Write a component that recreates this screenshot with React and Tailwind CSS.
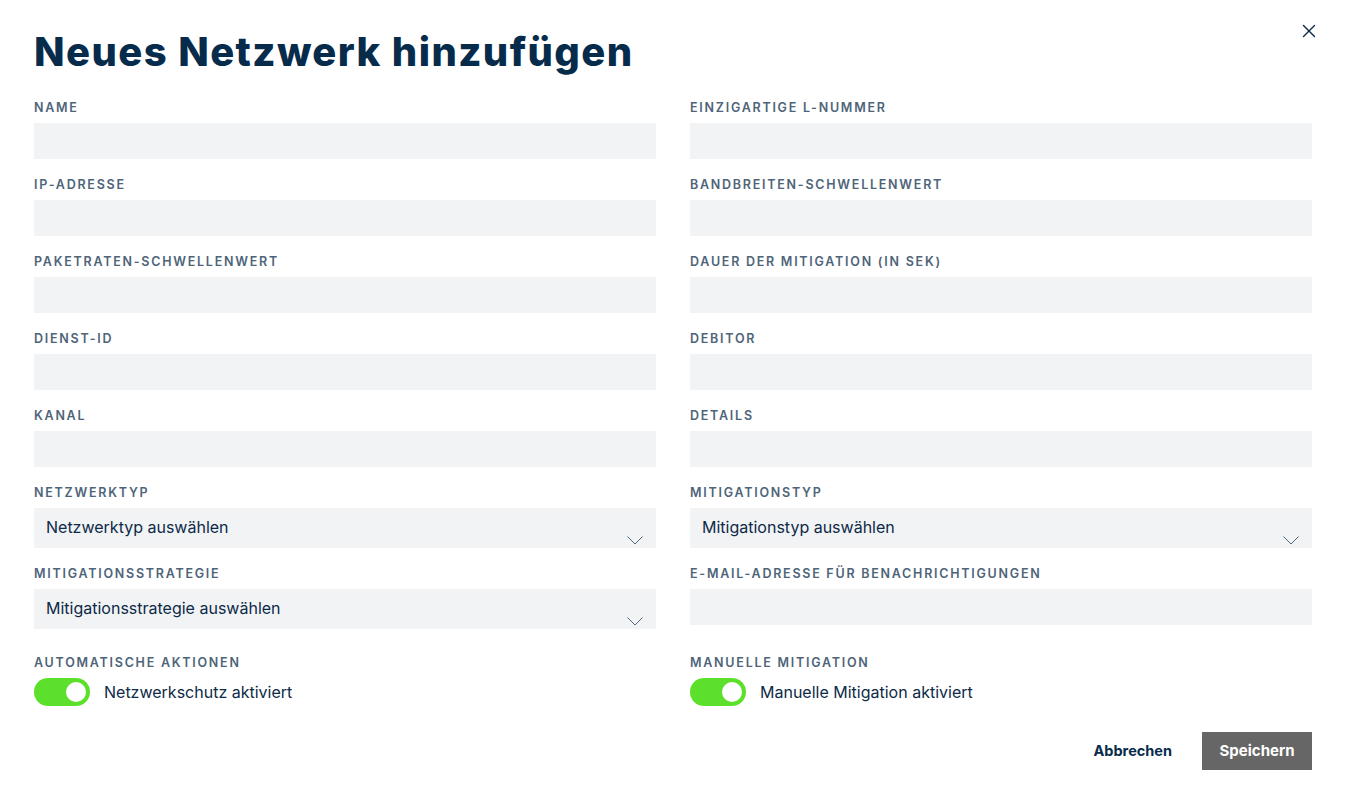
import { X } from 'lucide-react'

const felder = [
  ['Name', 'Einzigartige L-Nummer'],
  ['IP-Adresse', 'Bandbreiten-Schwellenwert'],
  ['Paketraten-Schwellenwert', 'Dauer der Mitigation (in Sek)'],
  ['Dienst-ID', 'Debitor'],
  ['Kanal', 'Details'],
]

function Label({ children }) {
  return (
    <label className="block text-[12.5px] leading-4 pt-px mb-[7px] font-semibold uppercase tracking-[0.14em] text-[#4e6479]">
      {children}
    </label>
  )
}

function Feld({ label }) {
  return (
    <div>
      <Label>{label}</Label>
      <input type="text" className="block w-full h-9 bg-[#f2f3f5] outline-none px-3" />
    </div>
  )
}

function Auswahl({ label, platzhalter }) {
  return (
    <div>
      <Label>{label}</Label>
      <div className="relative h-10 bg-[#f2f3f5] pl-3 pt-[9px] text-[16px] leading-5 text-[#0d2a47]">
        {platzhalter}
        <svg className="absolute right-[13px] bottom-[3px] w-4 h-[9px]" viewBox="0 0 16 9" fill="none">
          <path d="M0.5 0.5 L8 8 L15.5 0.5" stroke="#52697f" strokeWidth="1" />
        </svg>
      </div>
    </div>
  )
}

function Schalter({ label, text }) {
  return (
    <div className="mt-2">
      <Label>{label}</Label>
      <div className="flex items-center gap-[14px]">
        <span className="flex items-center justify-end w-14 h-7 rounded-full bg-[#5ce02b] pr-[4px]">
          <span className="w-5 h-5 rounded-full bg-white" />
        </span>
        <span className="text-[16px] text-[#0d2a47]">{text}</span>
      </div>
    </div>
  )
}

export default function App() {
  return (
    <div className="relative min-h-screen bg-white px-[34px] pt-[26px] font-['Inter',sans-serif]">
      <button className="absolute right-[26px] top-[20px] text-[#0d2a47]">
        <X className="w-[22px] h-[22px]" strokeWidth={1.5} />
      </button>

      <h1 className="text-[40px] leading-[52px] font-extrabold tracking-[0.035em] text-[#062b4b] mb-[21px]">
        Neues Netzwerk hinzufügen
      </h1>

      <div className="grid grid-cols-2 gap-x-[34px] gap-y-[17px]">
        {felder.map(([links, rechts]) => (
          <>
            <Feld key={links} label={links} />
            <Feld key={rechts} label={rechts} />
          </>
        ))}
        <Auswahl label="Netzwerktyp" platzhalter="Netzwerktyp auswählen" />
        <Auswahl label="Mitigationstyp" platzhalter="Mitigationstyp auswählen" />
        <Auswahl label="Mitigationsstrategie" platzhalter="Mitigationsstrategie auswählen" />
        <Feld label="E-Mail-Adresse für Benachrichtigungen" />
        <Schalter label="Automatische Aktionen" text="Netzwerkschutz aktiviert" />
        <Schalter label="Manuelle Mitigation" text="Manuelle Mitigation aktiviert" />
      </div>

      <div className="flex justify-end items-center gap-[30px] mt-[26px]">
        <button className="text-[14.5px] font-bold text-[#062b4b] px-0">Abbrechen</button>
        <button className="w-[110px] h-[38px] bg-[#666666] text-white text-[15px] font-bold">Speichern</button>
      </div>
    </div>
  )
}
